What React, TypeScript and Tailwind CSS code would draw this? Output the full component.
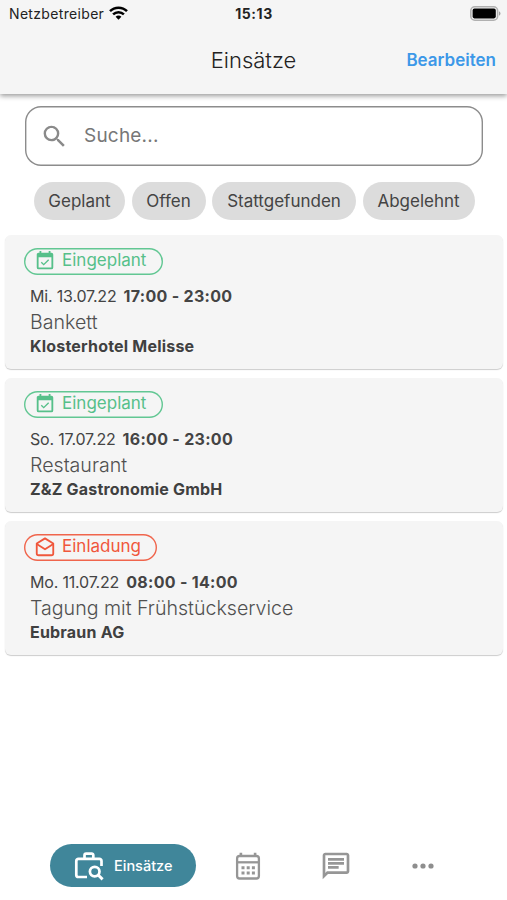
import React, { useState } from 'react';

type Status = 'planned' | 'invited';

interface Job {
  id: number;
  status: Status;
  date: string;
  time: string;
  title: string;
  company: string;
}

const JOBS: Job[] = [
  { id: 1, status: 'planned', date: 'Mi. 13.07.22', time: '17:00 - 23:00', title: 'Bankett', company: 'Klosterhotel Melisse' },
  { id: 2, status: 'planned', date: 'So. 17.07.22', time: '16:00 - 23:00', title: 'Restaurant', company: 'Z&Z Gastronomie GmbH' },
  { id: 3, status: 'invited', date: 'Mo. 11.07.22', time: '08:00 - 14:00', title: 'Tagung mit Frühstückservice', company: 'Eubraun AG' },
];

const FILTERS = [
  { label: 'Geplant', width: 'w-[91px]' },
  { label: 'Offen', width: 'w-[74px]' },
  { label: 'Stattgefunden', width: 'w-36' },
  { label: 'Abgelehnt', width: 'w-28' },
];

const WifiIcon = () => (
  <svg width="19" height="14" viewBox="0 0 19 14" fill="none" stroke="black" strokeWidth="2.5">
    <path d="M1 5.2C5.7 0.5 13.3 0.5 18 5.2" />
    <path d="M4.1 8.4C7.1 5.4 11.9 5.4 14.9 8.4" />
    <path d="M9.5 13.8L6.6 10.8C8.2 9.2 10.8 9.2 12.4 10.8Z" fill="black" stroke="none" />
  </svg>
);

const BatteryIcon = () => (
  <svg width="31" height="15" viewBox="0 0 31 15">
    <rect x="0.8" y="0.8" width="26.8" height="13.4" rx="4" fill="#f5f5f5" stroke="#b0b0b0" strokeWidth="1.6" />
    <rect x="2.6" y="2.6" width="23.2" height="9.8" rx="1.8" fill="black" />
    <path d="M29 5.2C31 6.2 31 8.8 29 9.8Z" fill="#a0a0a0" />
  </svg>
);

const SearchIcon = () => (
  <svg width="29" height="29" viewBox="0 0 24 24" fill="#8a8a8a">
    <path d="M15.5 14h-.79l-.28-.27A6.471 6.471 0 0 0 16 9.5 6.5 6.5 0 1 0 9.5 16c1.61 0 3.09-.59 4.23-1.57l.27.28v.79l5 4.99L20.49 19l-4.99-5zm-6 0C7.01 14 5 11.99 5 9.5S7.01 5 9.5 5 14 7.01 14 9.5 11.99 14 9.5 14z" />
  </svg>
);

const CalendarCheckIcon = () => (
  <svg width="22" height="22" viewBox="0 0 24 24" fill="currentColor">
    <path d="M19 19H5V8h14m0-5h-1V1h-2v2H8V1H6v2H5c-1.11 0-2 .9-2 2v14a2 2 0 0 0 2 2h14a2 2 0 0 0 2-2V5a2 2 0 0 0-2-2m-2.47 8.06L15.47 10l-4.88 4.88-2.12-2.12-1.06 1.06L10.59 17l5.94-5.94z" />
  </svg>
);

const MailOpenIcon = () => (
  <svg width="22" height="22" viewBox="0 0 24 24" fill="none" stroke="currentColor" strokeWidth="2" strokeLinejoin="round">
    <path d="M3 8.2L12 2.6l9 5.6V19a2 2 0 0 1-2 2H5a2 2 0 0 1-2-2z" />
    <path d="M3 8.8l9 5.6 9-5.6" />
  </svg>
);

const JobsIcon = () => (
  <svg width="30" height="30" viewBox="0 0 30 30" fill="none" stroke="white" strokeWidth="2.7">
    <path d="M13 26H4.4A2.1 2.1 0 0 1 2.3 23.9V9.9A2.1 2.1 0 0 1 4.4 7.8H25.4A2.1 2.1 0 0 1 27.5 9.9V15" strokeLinejoin="round" />
    <path d="M10.5 7.5V4.2A1.6 1.6 0 0 1 12.1 2.6H17.7A1.6 1.6 0 0 1 19.3 4.2V7.5" />
    <circle cx="20.7" cy="20.6" r="4.8" />
    <path d="M24.2 24L28.6 28.4" strokeWidth="2.9" />
  </svg>
);

const CalendarIcon = () => (
  <svg width="26" height="28" viewBox="0 0 26 28" fill="none" stroke="#969696" strokeWidth="2.3">
    <rect x="2.1" y="4" width="21.8" height="22.5" rx="2.5" />
    <path d="M2 10.3H24" />
    <path d="M5.9 0.8V4M20.1 0.8V4" strokeWidth="2.6" />
    <path d="M6.5 15.8H9.5M11.7 15.8H14.7M16.9 15.8H19.9M6.5 21H9.5M11.7 21H14.7M16.9 21H19.9" strokeWidth="3" />
  </svg>
);

const ChatIcon = () => (
  <svg width="32" height="32" viewBox="0 0 24 24" fill="#969696">
    <path d="M4 4h16v12H5.17L4 17.17V4m0-2c-1.1 0-1.99.9-1.99 2L2 22l4-4h14c1.1 0 2-.9 2-2V4c0-1.1-.9-2-2-2H4zm2 10h8v2H6v-2zm0-3h12v2H6V9zm0-3h12v2H6V6z" />
  </svg>
);

const MoreIcon = () => (
  <svg width="22" height="6" viewBox="0 0 22 6" fill="#8e8e8e">
    <circle cx="3" cy="3" r="2.6" />
    <circle cx="11" cy="3" r="2.6" />
    <circle cx="19" cy="3" r="2.6" />
  </svg>
);

const StatusBadge: React.FC<{ status: Status }> = ({ status }) => {
  const planned = status === 'planned';
  return (
    <div
      className={`flex h-[27px] items-center rounded-full pb-px pl-2.5 inset-ring-[1.4px] ${
        planned ? 'w-[139px] text-[#56c08a] inset-ring-[#62c793]' : 'w-[133px] text-[#f0573c] inset-ring-[#f0654c]'
      }`}
    >
      {planned ? <CalendarCheckIcon /> : <MailOpenIcon />}
      <span className="ml-1.5 pb-px text-[17px] leading-none">{planned ? 'Eingeplant' : 'Einladung'}</span>
    </div>
  );
};

const JobCard: React.FC<{ job: Job }> = ({ job }) => (
  <div className="h-[134px] rounded-md bg-[#f5f5f5] pl-[19px] pt-[13px] shadow-[0_1px_1px_rgba(0,0,0,0.2)]">
    <StatusBadge status={job.status} />
    <div className="pl-1.5 pt-2">
      <div className="flex h-[26px] items-center gap-[7px] text-base text-[#444]">
        <span className="tracking-[-0.18px]">{job.date}</span>
        <span className="font-bold tracking-[0.3px]">{job.time}</span>
      </div>
      <div className="flex h-[26px] items-center pt-px text-[19.6px] font-light text-[#505050]">{job.title}</div>
      <div className="flex h-[22px] items-center text-base font-bold tracking-[0.2px] text-[#404040]">{job.company}</div>
    </div>
  </div>
);

export default function App() {
  const [query, setQuery] = useState('');

  return (
    <div className="flex h-[900px] w-[507px] flex-col overflow-hidden bg-white font-[Inter,sans-serif]">
      <header className="h-[94px] shrink-0 bg-[#f5f5f5] shadow-[0_2px_5px_rgba(0,0,0,0.4)]">
        <div className="grid h-7 grid-cols-3 items-center pl-[9px] pr-1.5 text-sm text-[#222]">
          <div className="flex items-center gap-[5px]">
            <span className="tracking-[0.33px]">Netzbetreiber</span>
            <span className="pb-0.5">
              <WifiIcon />
            </span>
          </div>
          <span className="pr-0.5 text-center font-bold tracking-[0.6px]">15:13</span>
          <div className="flex justify-end pb-0.5">
            <BatteryIcon />
          </div>
        </div>
        <div className="grid h-16 grid-cols-3 items-center px-[11px]">
          <span />
          <h1 className="text-center text-[22px] font-light text-[#222]">Einsätze</h1>
          <button className="pt-px text-right text-[17px] font-semibold text-[#3c98e8]">Bearbeiten</button>
        </div>
      </header>

      <div className="ml-[25px] mt-3 flex h-[60px] w-[458px] shrink-0 items-center rounded-2xl pl-[15px] inset-ring-[1.4px] inset-ring-[#8c8c8c]">
        <SearchIcon />
        <input
          value={query}
          onChange={e => setQuery(e.target.value)}
          placeholder="Suche..."
          className="ml-[15px] h-10 w-80 pb-0.5 text-[19px] tracking-[0.2px] outline-none placeholder:text-[#777]"
        />
      </div>

      <div className="ml-[34px] mt-4 flex shrink-0 gap-[6.5px]">
        {FILTERS.map(filter => (
          <button key={filter.label} className={`h-[38px] shrink-0 rounded-full bg-[#dcdcdc] pt-0.5 text-[17px] text-[#444] ${filter.width}`}>
            {filter.label}
          </button>
        ))}
      </div>

      <main className="ml-[5px] mt-[15px] flex w-[498px] flex-1 flex-col gap-[9px]">
        {JOBS.map(job => (
          <JobCard key={job.id} job={job} />
        ))}
      </main>

      <nav className="mb-[13px] flex h-[43px] shrink-0 items-center pl-[50px]">
        <button className="flex h-[43px] w-[146px] items-center rounded-full bg-[#40869a] pl-6 pt-px text-[14.5px] font-medium text-white">
          <JobsIcon />
          <span className="ml-2.5 pb-px">Einsätze</span>
        </button>
        <button className="ml-2 flex w-[88px] justify-center">
          <CalendarIcon />
        </button>
        <button className="flex w-[88px] justify-center">
          <ChatIcon />
        </button>
        <button className="flex w-[86px] justify-center">
          <MoreIcon />
        </button>
      </nav>
    </div>
  );
}
